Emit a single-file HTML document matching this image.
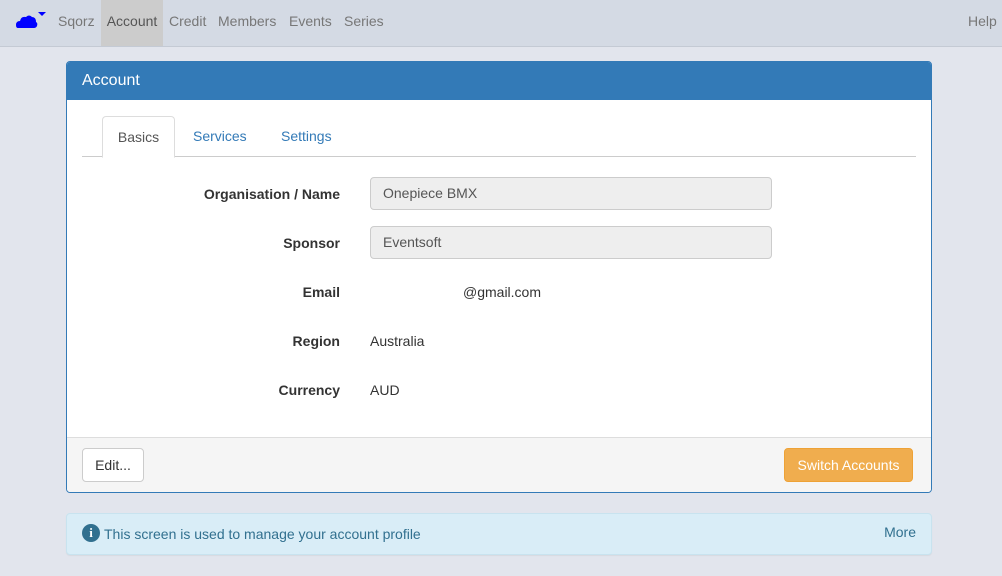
<!DOCTYPE html>
<html><head><style>
body{margin:0;background:#e2e5ed;font-family:"Liberation Sans",sans-serif;font-size:14px;color:#333;width:1002px;height:576px;overflow:hidden;position:relative}
.nav{position:absolute;left:0;top:0;width:1002px;height:46px;background:#d4dae4;border-bottom:1px solid #c4cad4}
.nav a{position:absolute;top:0;height:46px;line-height:42px;color:#777;font-size:14px}
.panel{position:absolute;left:66px;top:61px;width:864px;height:430px;border:1px solid #337ab7;border-radius:4px;background:#fff;overflow:hidden}
.ph{height:38px;background:#337ab7;color:#fff;font-size:16px;line-height:38px;padding-left:15px}
.tabs{position:absolute;left:15px;top:94px;width:834px;height:0;border-bottom:1px solid #ccc}
.tab{position:absolute;top:-40px;height:40px;line-height:40px;color:#337ab7}
.lbl{position:absolute;right:591px;font-weight:bold;width:200px;text-align:right}
.inp{position:absolute;left:303px;height:33px;background:#eee;border:1px solid #ccc;border-radius:4px;line-height:31px;padding-left:12px;color:#555;box-sizing:border-box;width:402px}
.val{position:absolute;left:303px}
.foot{position:absolute;left:0;top:375px;width:864px;height:56px;background:#f5f5f5;border-top:1px solid #ddd}
</style></head><body>
<div class="nav">
<svg style="position:absolute;left:16px;top:11px" width="32" height="20" viewBox="0 0 32 20"><path d="M2 17 Q0 17 0 14 Q0 10 4 10 Q5 5 10 6 Q13 3 16 6 Q20 6 20 11 Q22 12 21 15 Q20 17 18 17Z" fill="#0000ff"/><path d="M22 1h8l-4 4z" fill="#0000ff"/></svg>
<a style="left:58px">Sqorz</a>
<a style="left:101px;width:62px;background:#ccc;color:#555;text-align:center">Account</a>
<a style="left:169px">Credit</a>
<a style="left:218px">Members</a>
<a style="left:289px">Events</a>
<a style="left:344px">Series</a>
<a style="left:968px">Help</a>
</div>
<div class="panel">
<div class="ph">Account</div>
<div class="tabs">
<div class="tab" style="left:20px;width:71px;background:#fff;border:1px solid #ddd;border-bottom:1px solid #fff;border-radius:4px 4px 0 0;color:#555;text-align:center;height:40px">Basics</div>
<div class="tab" style="left:111px">Services</div>
<div class="tab" style="left:199px">Settings</div>
</div>
<div class="lbl" style="top:124px">Organisation / Name</div>
<div class="inp" style="top:115px">Onepiece BMX</div>
<div class="lbl" style="top:173px">Sponsor</div>
<div class="inp" style="top:164px">Eventsoft</div>
<div class="lbl" style="top:222px">Email</div>
<div class="val" style="top:222px;left:396px">@gmail.com</div>
<div class="lbl" style="top:271px">Region</div>
<div class="val" style="top:271px">Australia</div>
<div class="lbl" style="top:320px">Currency</div>
<div class="val" style="top:320px">AUD</div>
<div class="foot">
<div style="position:absolute;left:15px;top:10px;width:60px;height:32px;border:1px solid #ccc;border-radius:4px;background:#fff;line-height:32px;text-align:center">Edit...</div>
<div style="position:absolute;left:717px;top:10px;width:129px;height:34px;border-radius:4px;background:#f0ad4e;border:1px solid #eea236;color:#fff;line-height:32px;text-align:center;box-sizing:border-box">Switch Accounts</div>
</div>
</div>
<div style="position:absolute;left:66px;top:513px;width:866px;height:42px;background:#d9edf7;border:1px solid #c8e3ef;border-radius:4px;color:#31708f;box-sizing:border-box;box-shadow:0 1px 1px rgba(0,0,0,.05)">
<div style="position:absolute;left:15px;top:10px;width:18px;height:18px;border-radius:50%;background:#31708f;color:#fff;font-weight:bold;font-family:'Liberation Serif',serif;font-size:13px;text-align:center;line-height:18px">i</div>
<div style="position:absolute;left:37px;top:12px">This screen is used to manage your account profile</div>
<div style="position:absolute;right:15px;top:10px">More</div>
</div>
</body></html>
